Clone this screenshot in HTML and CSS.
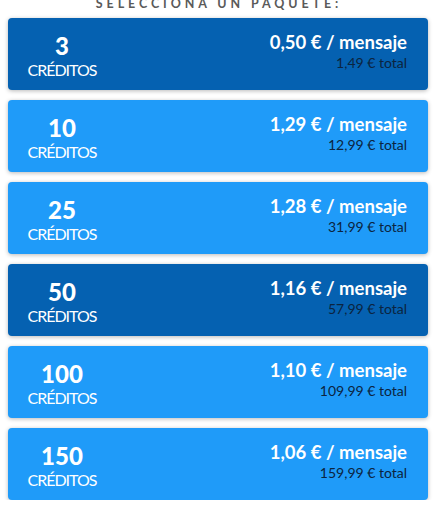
FILE: index.html
```html
<!DOCTYPE html>
<html lang="es">
<head>
<meta charset="utf-8">
<link rel="stylesheet" href="styles.css">
</head>
<body>
<div class="page">
  <h2 class="title">SELECCIONA UN PAQUETE:</h2>
  <div class="list">
    <div class="card dark">
      <div class="qty"><span class="num">3</span><span class="lbl">CRÉDITOS</span></div>
      <div class="price"><span class="per">0,50 € / mensaje</span><span class="tot">1,49 € total</span></div>
    </div>
    <div class="card">
      <div class="qty"><span class="num">10</span><span class="lbl">CRÉDITOS</span></div>
      <div class="price"><span class="per">1,29 € / mensaje</span><span class="tot">12,99 € total</span></div>
    </div>
    <div class="card">
      <div class="qty"><span class="num">25</span><span class="lbl">CRÉDITOS</span></div>
      <div class="price"><span class="per">1,28 € / mensaje</span><span class="tot">31,99 € total</span></div>
    </div>
    <div class="card dark">
      <div class="qty"><span class="num">50</span><span class="lbl">CRÉDITOS</span></div>
      <div class="price"><span class="per">1,16 € / mensaje</span><span class="tot">57,99 € total</span></div>
    </div>
    <div class="card">
      <div class="qty"><span class="num">100</span><span class="lbl">CRÉDITOS</span></div>
      <div class="price"><span class="per">1,10 € / mensaje</span><span class="tot">109,99 € total</span></div>
    </div>
    <div class="card">
      <div class="qty"><span class="num">150</span><span class="lbl">CRÉDITOS</span></div>
      <div class="price"><span class="per">1,06 € / mensaje</span><span class="tot">159,99 € total</span></div>
    </div>
  </div>
</div>
</body>
</html>
```
FILE: styles.css
```css
* { box-sizing: border-box; }
html, body { margin: 0; padding: 0; background: #fff; }
body { font-family: "Lato", "Noto Sans", sans-serif; }
.page { padding: 0 13px 0 8px; }
.title {
  margin: -3px 0 0 0;
  height: 21px;
  text-align: center;
  font-size: 12.5px;
  font-weight: 700;
  letter-spacing: 3.9px;
  color: #5a5a5a;
  line-height: 14px;
  padding-left: 2px;
}
.list { display: flex; flex-direction: column; gap: 10px; }
.card {
  height: 72px;
  border-radius: 4px;
  background: #1f9bf9;
  box-shadow: 0 1px 4px rgba(0,0,0,0.28);
  display: flex;
  align-items: center;
  justify-content: space-between;
  padding: 0 21px 0 19px;
}
.card.dark { background: #0561b1; }
.qty {
  display: flex;
  flex-direction: column;
  align-items: center;
  color: #fff;
  width: 70px;
  margin-top: 3px;
}
.num { font-size: 24px; font-weight: 900; line-height: 26px; }
.lbl { font-size: 16px; line-height: 18px; letter-spacing: -1px; margin-top: 2px; }
.price {
  display: flex;
  flex-direction: column;
  align-items: flex-end;
  margin-top: -4px;
}
.per { color: #fff; font-size: 18.5px; font-weight: 700; line-height: 21px; }
.tot { color: #0b2440; font-size: 14px; line-height: 19px; }
```
